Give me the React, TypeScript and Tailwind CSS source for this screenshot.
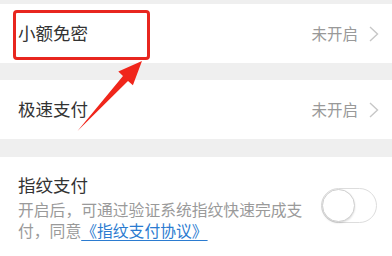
import React from "react";

function Chevron() {
  return (
    <svg width="12" height="18" viewBox="0 0 12 18" className="ml-[10px]">
      <path d="M2 2 L9.5 9 L2 16" fill="none" stroke="#c7c7c7" strokeWidth="1.4" />
    </svg>
  );
}

function Row({ title, value }: { title: string; value: string }) {
  return (
    <div className="flex h-[59px] items-center justify-between bg-white pl-[18px] pr-[12px]">
      <span className="text-[17.5px] text-[#333333]">{title}</span>
      <div className="flex items-center">
        <span className="text-[15.5px] text-[#999999]">{value}</span>
        <Chevron />
      </div>
    </div>
  );
}

export default function App() {
  return (
    <div
      className="relative h-[256px] w-[392px] overflow-hidden bg-[#efefef]"
      style={{ fontFamily: '"Noto Sans CJK SC", "Noto Sans", sans-serif' }}
    >
      <div className="h-[4px]" />
      <Row title="小额免密" value="未开启" />
      <div className="h-[17px]" />
      <Row title="极速支付" value="未开启" />
      <div className="h-[18px]" />
      <div className="flex h-[99px] items-start justify-between bg-white pl-[18px] pr-[12px] pt-[15px]">
        <div>
          <div className="text-[17.5px] leading-[26px] text-[#333333]">指纹支付</div>
          <div className="mt-[1px] text-[15.8px] leading-[21px] text-[#9a9a9a]">
            <div>开启后，可通过验证系统指纹快速完成支</div>
            <div>
              付，同意
              <span className="text-[#2b7bd0] underline underline-offset-[3px] decoration-[1px]">
                《指纹支付协议》
              </span>
            </div>
          </div>
        </div>
        <div className="mr-[3px] mt-[16px] h-[35px] w-[56px] rounded-full border border-[#dddddd] bg-white">
          <div className="h-[33px] w-[33px] rounded-full border border-[#cfcfcf] bg-white shadow-[0_1px_2px_rgba(0,0,0,0.15)]" />
        </div>
      </div>

      <div className="absolute left-[13px] top-[10px] h-[50px] w-[137px] rounded-[4px] border-[3px] border-[#e8261f]" />
      <svg className="absolute left-0 top-0" width="392" height="256" viewBox="0 0 392 256">
        <polygon
          points="77.5,131 123,76 118.3,71.6 142,61 132.9,85.3 128,81"
          fill="#f0261b"
        />
      </svg>
    </div>
  );
}
